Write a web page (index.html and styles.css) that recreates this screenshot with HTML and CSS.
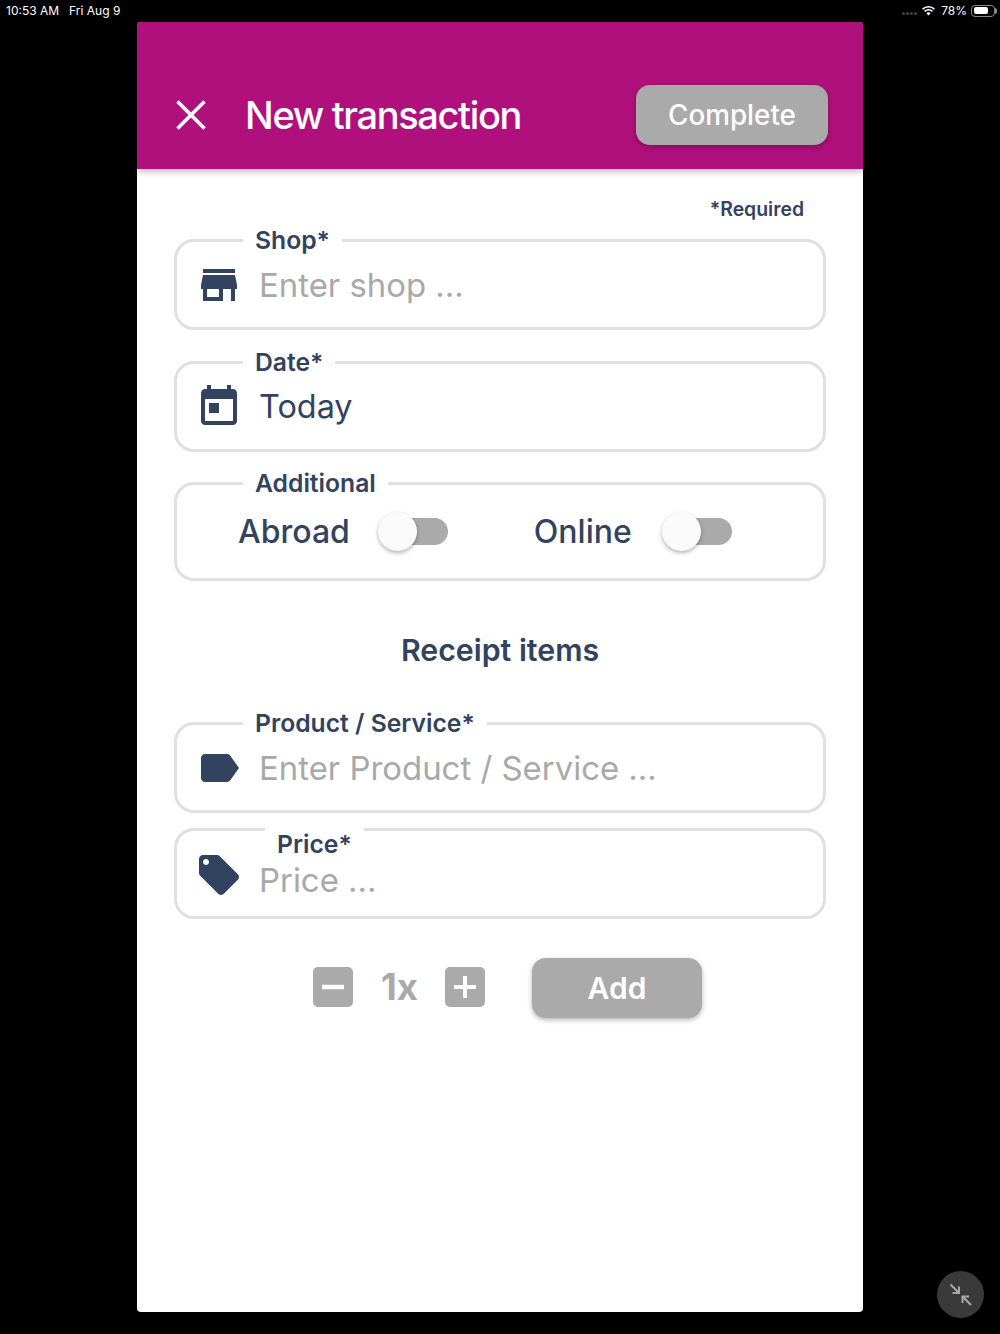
FILE: index.html
```html
<!DOCTYPE html>
<html lang="en">
<head>
    <meta charset="UTF-8">
    <title>New transaction</title>
    <link rel="stylesheet" href="styles.css">
</head>
<body>
    <div class="statusbar">
        <div class="status-left">
            <span>10:53 AM</span>
            <span>Fri Aug 9</span>
        </div>
        <div class="status-right">
            <span class="signal"><i></i><i></i><i></i><i></i></span>
            <svg class="wifi" viewBox="0 0 16 12" width="15" height="11">
                <path d="M8 11.500 5.700 9a3.300 3.300 0 0 1 4.600 0z" fill="#fff"/>
                <path d="M3.700 7a6.200 6.200 0 0 1 8.600 0M1.500 4.500a9.400 9.400 0 0 1 13 0" fill="none" stroke="#fff" stroke-width="1.700"/>
            </svg>
            <span>78%</span>
            <span class="battery"><i></i></span>
        </div>
    </div>

    <div class="panel">
        <header class="topbar">
            <svg class="close" viewBox="0 0 30 30" width="30" height="30">
                <path d="M1.500 1.500 28.500 28.500M28.500 1.500 1.500 28.500" stroke="#fff" stroke-width="3.600" fill="none"/>
            </svg>
            <h1 class="title">New transaction</h1>
            <button class="btn btn-complete">Complete</button>
        </header>

        <main class="content">
            <p class="required">*Required</p>

            <fieldset class="box">
                <legend class="box-label">Shop*</legend>
                <div class="box-row">
                    <svg class="icon" viewBox="3 0 18 24"><path d="M20 4H4v2h16V4zm1 10v-2l-1-5H4l-1 5v2h1v6h10v-6h4v6h2v-6h1zm-9 4H6v-4h6v4z"/></svg>
                    <span class="placeholder">Enter shop ...</span>
                </div>
            </fieldset>

            <fieldset class="box">
                <legend class="box-label">Date*</legend>
                <div class="box-row">
                    <svg class="icon" viewBox="3 0 18 24"><path d="M19 3h-1V1h-2v2H8V1H6v2H5c-1.110 0-1.990.9-1.990 2L3 19c0 1.100.89 2 2 2h14c1.100 0 2-.9 2-2V5c0-1.100-.9-2-2-2zm0 16H5V8h14v11zM7 10h5v5H7z"/></svg>
                    <span class="value">Today</span>
                </div>
            </fieldset>

            <fieldset class="box box-additional">
                <legend class="box-label">Additional</legend>
                <div class="toggles">
                    <span class="value toggle-name">Abroad</span>
                    <span class="switch"><i class="knob"></i></span>
                    <span class="value toggle-name second">Online</span>
                    <span class="switch"><i class="knob"></i></span>
                </div>
            </fieldset>

            <h2 class="subtitle">Receipt items</h2>

            <fieldset class="box">
                <legend class="box-label">Product / Service*</legend>
                <div class="box-row">
                    <svg class="icon" viewBox="3 0 18 24"><path d="M17.630 5.840C17.270 5.330 16.670 5 16 5L5 5.010C3.900 5.010 3 5.900 3 7v10c0 1.100.9 1.990 2 1.990L16 19c.67 0 1.270-.33 1.630-.84L22 12l-4.370-6.160z"/></svg>
                    <span class="placeholder">Enter Product / Service ...</span>
                </div>
            </fieldset>

            <fieldset class="box box-price">
                <legend class="box-label"><span class="low-label">Price*</span></legend>
                <div class="box-row">
                    <svg class="icon" viewBox="3 0 18 24"><path d="M21.410 11.580l-9-9C12.050 2.220 11.550 2 11 2H4c-1.100 0-2 .9-2 2v7c0 .55.22 1.050.59 1.420l9 9c.36.36.86.58 1.410.58.55 0 1.050-.22 1.410-.59l7-7c.37-.36.59-.86.59-1.410 0-.55-.23-1.060-.59-1.420zM5.500 7C4.670 7 4 6.330 4 5.500S4.670 4 5.500 4 7 4.670 7 5.500 6.330 7 5.500 7z"/></svg>
                    <span class="placeholder">Price ...</span>
                </div>
            </fieldset>

            <div class="quantity">
                <span class="step">
                    <svg viewBox="0 0 40 40" width="40" height="40"><path d="M9 20h22" stroke="#fff" stroke-width="4.500"/></svg>
                </span>
                <span class="count">1x</span>
                <span class="step">
                    <svg viewBox="0 0 40 40" width="40" height="40"><path d="M9 20h22M20 9v22" stroke="#fff" stroke-width="4"/></svg>
                </span>
                <button class="btn btn-add">Add</button>
            </div>
        </main>
    </div>

    <div class="compress">
        <svg viewBox="0 0 24 24" width="24" height="24">
            <path d="M1.500 1.500 10 10M10 3.500V10H3.500M22 22 13.500 13.500M13.500 20V13.500H20" fill="none" stroke="#a8a8a8" stroke-width="2"/>
        </svg>
    </div>
</body>
</html>
```

FILE: styles.css
```css
* {
    box-sizing: border-box;
}

body {
    margin: 0;
    height: 1334px;
    overflow: hidden;
    background-color: #000;
    font-family: Inter, "Noto Sans", sans-serif;
    color: #324360;
}

/* status bar */
.statusbar {
    display: flex;
    justify-content: space-between;
    height: 22px;
    padding: 3px 5px 0 6px;
    font-size: 12px;
    line-height: 15px;
    color: #fff;
}

.status-left {
    display: flex;
    gap: 10px;
}

.status-right {
    display: flex;
    align-items: center;
    height: 15px;
    gap: 5px;
}

.signal {
    display: flex;
    gap: 1px;
    margin-top: 6px;
    margin-right: -1px;
}

.signal i {
    width: 3px;
    height: 3px;
    border-radius: 50%;
    background-color: #444;
}

.battery {
    position: relative;
    width: 24px;
    height: 12px;
    margin-left: -1px;
    padding: 1.500px;
    border: 1px solid #888;
    border-radius: 4px;
}

.battery::after {
    content: "";
    position: absolute;
    right: -3px;
    top: 2px;
    width: 2px;
    height: 6px;
    border-radius: 0 2px 2px 0;
    background-color: #888;
}

.battery i {
    display: block;
    width: 78%;
    height: 100%;
    border-radius: 2px;
    background-color: #fff;
}

/* main panel */
.panel {
    width: 726px;
    height: 1290px;
    margin-left: 137px;
    border-radius: 4px;
    overflow: hidden;
    background-color: #fff;
}

.topbar {
    display: flex;
    align-items: center;
    height: 147px;
    padding: 63px 35px 24px 39px;
    background-color: #b0107c;
    box-shadow: 0 2px 7px rgba(0, 0, 0, 0.3);
    position: relative;
}

.close {
    flex: none;
}

.title {
    flex: 1;
    margin: 0 0 0 39px;
    font-size: 38px;
    font-weight: 500;
    letter-spacing: -1.350px;
    color: #fff;
}

.btn {
    border: none;
    height: 60px;
    border-radius: 14px;
    background-color: #aaa;
    color: #fff;
    font-family: inherit;
    font-weight: 500;
    box-shadow: 0 2px 5px rgba(0, 0, 0, 0.3);
}

.btn-complete {
    width: 192px;
    font-size: 27.800px;
}

.content {
    padding: 30px 37px 0 37px;
}

.required {
    margin: 0 22px 0 0;
    text-align: right;
    font-size: 19.400px;
    line-height: 20px;
    font-weight: 600;
}

/* fieldsets */
.box {
    display: block;
    height: 102px;
    min-width: 0;
    margin: 20px 0 0 0;
    padding: 0;
    border: 3px solid #e0e0e0;
    border-radius: 20px;
}

.required + .box {
    margin-top: 9px;
}

.box-label {
    height: 25px;
    margin-left: 66px;
    padding: 0 12px;
    font-size: 24.700px;
    line-height: 25px;
    font-weight: 600;
}

.box-row {
    display: flex;
    align-items: center;
    height: 64px;
    padding-left: 24px;
    gap: 22px;
}

.icon {
    flex: none;
    width: 36px;
    height: 48px;
    overflow: visible;
    fill: #324360;
}

.placeholder {
    font-size: 32.900px;
    line-height: 40px;
    color: #a9a9a9;
}

.value {
    font-size: 32.400px;
    line-height: 40px;
}

.box-additional {
    height: 110px;
    margin-top: 19px;
}

.toggles {
    display: flex;
    align-items: center;
    height: 71px;
    padding-left: 61px;
}

.toggle-name {
    font-size: 32px;
    font-weight: 500;
}

.second {
    margin-left: 86px;
}

.switch {
    display: flex;
    align-items: center;
    justify-content: flex-end;
    position: relative;
    width: 70px;
    height: 39px;
    margin-left: 28px;
}

.second + .switch {
    margin-left: 30px;
}

.switch::before {
    content: "";
    width: 52px;
    height: 27px;
    border-radius: 14px;
    background-color: #aaa;
}

.knob {
    position: absolute;
    left: 0;
    top: 0;
    width: 39px;
    height: 39px;
    border-radius: 50%;
    background-color: #fafafa;
    box-shadow: 0 2px 4px rgba(0, 0, 0, 0.3);
}

.subtitle {
    margin: 49px 0 0 0;
    height: 40px;
    text-align: center;
    font-size: 30.300px;
    line-height: 40px;
    font-weight: 600;
}

.subtitle + .box {
    margin-top: 41px;
}

.box-price {
    margin-top: 4px;
}

.box-price .box-label {
    margin-left: 88px;
}

.low-label {
    display: block;
    transform: translateY(15px);
}

.box-price .box-row {
    margin-top: 6px;
}

.box-price .icon {
    margin-bottom: 10px;
}

/* quantity row */
.quantity {
    display: flex;
    align-items: center;
    margin: 37px 0 0 139px;
}

.step {
    width: 40px;
    height: 40px;
    border-radius: 5px;
    background-color: #aaa;
}

.step svg {
    display: block;
}

.count {
    width: 92px;
    padding-left: 28px;
    font-size: 36.500px;
    font-weight: 700;
    letter-spacing: 0;
    color: #aaa;
}

.btn-add {
    width: 170px;
    margin: 2px 0 0 47px;
    font-size: 30px;
    font-weight: 600;
}

/* floating button in the corner */
.compress {
    position: absolute;
    left: 937px;
    top: 1271px;
    display: flex;
    align-items: center;
    justify-content: center;
    width: 47px;
    height: 47px;
    border-radius: 50%;
    background-color: #3a3a3a;
}
```
